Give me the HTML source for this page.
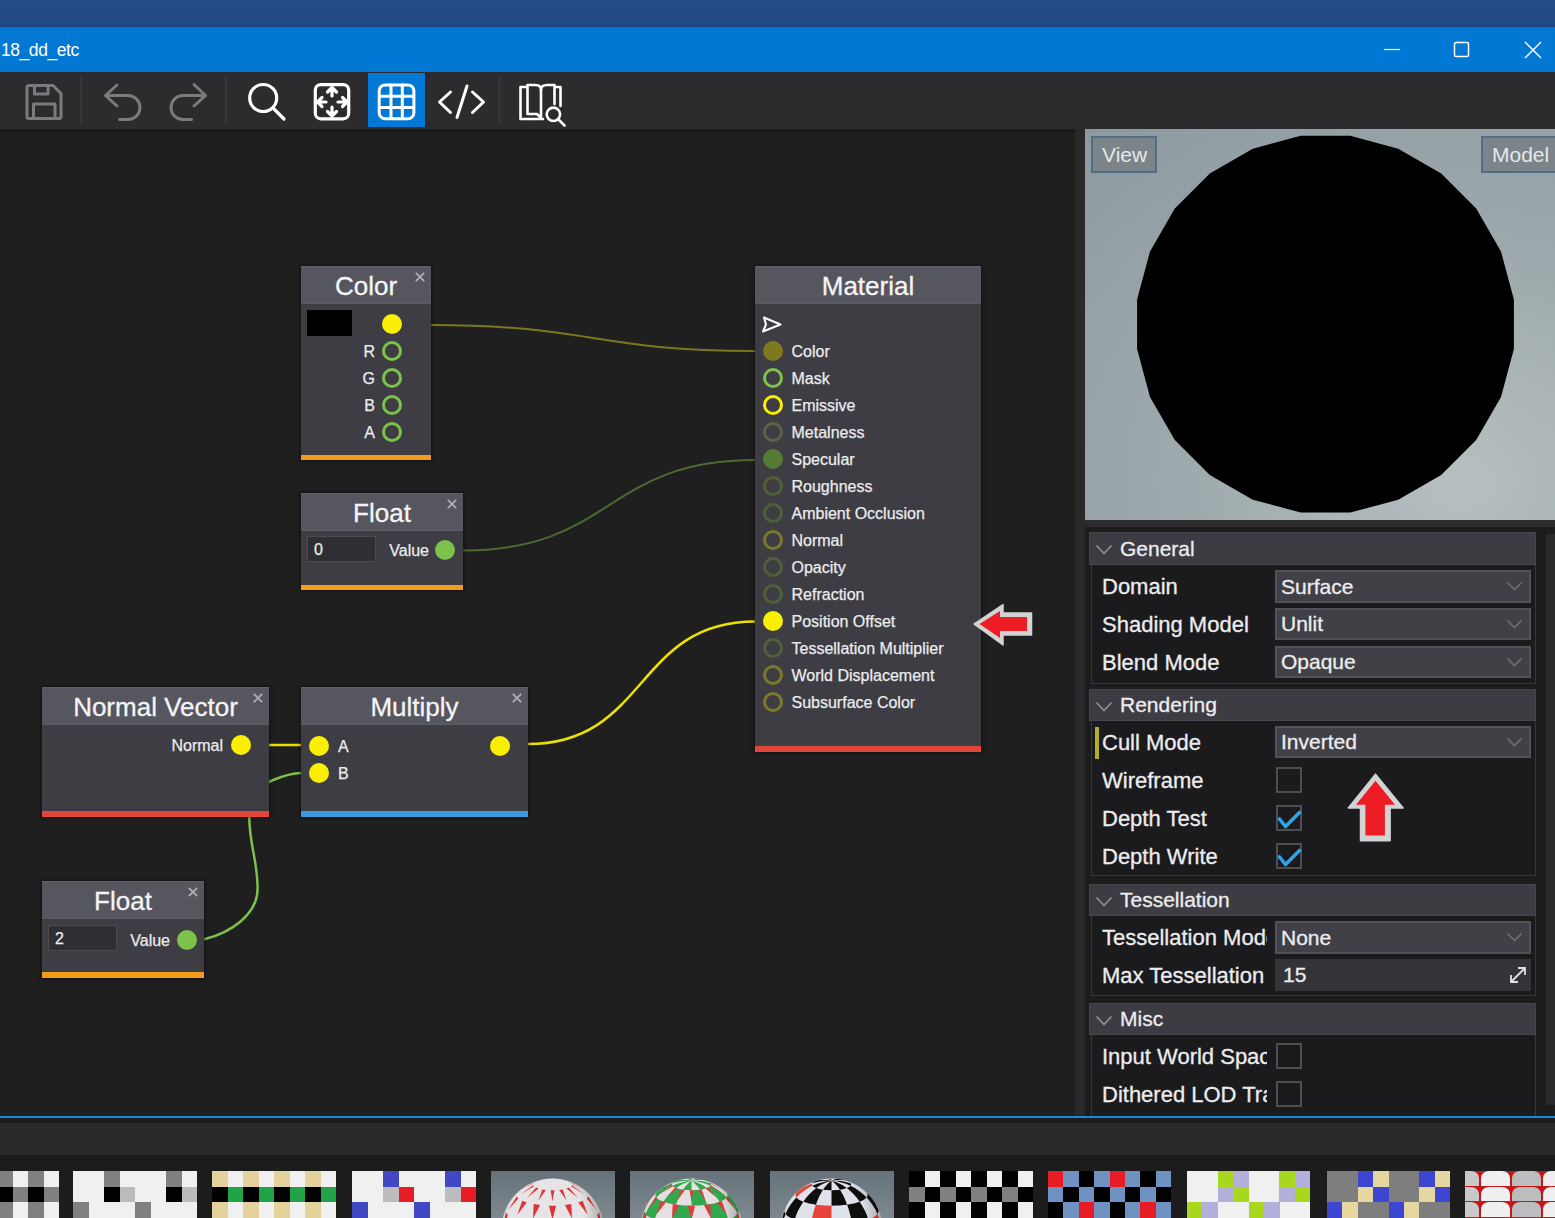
<!DOCTYPE html>
<html><head><meta charset="utf-8">
<style>
*{box-sizing:border-box;margin:0;padding:0}
html,body{width:1555px;height:1218px;overflow:hidden;background:#1f1f1f;font-family:"Liberation Sans",sans-serif;color:#e8e8ea}
.a{position:absolute}
#top{left:0;top:0;width:1555px;height:27px;background:linear-gradient(#254c89,#21487f)}
#title{left:0;top:27px;width:1555px;height:45px;background:#0078d4}
#title .t{left:1px;top:13px;font-size:17.5px;letter-spacing:-0.45px;color:#fff;line-height:20px}
#tb{left:0;top:72px;width:1555px;height:57px;background:#2c2c2f}
#canvas{left:0;top:129px;width:1075px;height:987px;background:#1f1f1f;overflow:hidden}
.node{position:absolute;background:#3d3d43;box-shadow:0 0 3px 1px rgba(0,0,0,.45)}
.node .hd{position:absolute;left:0;top:0;width:100%;height:38px;background:#56565e;border-top:1px solid #616168;border-bottom:1px solid #5d5d63;text-align:center;font-size:26px;line-height:39px;color:#f4f4f6;-webkit-text-stroke:0.3px #f4f4f6}
.node .x{position:absolute;top:6px;right:6px;width:10px;height:10px}
.node .st{position:absolute;left:0;bottom:0;width:100%;height:6px}
.lbl{position:absolute;font-size:16px;line-height:20px;color:#ececee;-webkit-text-stroke:0.25px #ececee;white-space:nowrap}
.ptxt{color:#ececee;white-space:nowrap;-webkit-text-stroke:0.3px #ececee}
.sock{position:absolute;width:20px;height:20px;border-radius:50%}
</style></head><body>
<div id="top" class="a"></div>
<div id="title" class="a"><div class="t a">18_dd_etc</div>
<svg class="a" style="left:0;top:0" width="1555" height="45">
<line x1="1384" y1="22.5" x2="1400" y2="22.5" stroke="#fff" stroke-width="1.2"/>
<rect x="1454.5" y="15.5" width="14" height="14" rx="1.5" fill="none" stroke="#fff" stroke-width="1.5"/>
<path d="M1525 15 L1541 31 M1541 15 L1525 31" stroke="#fff" stroke-width="1.5"/>
</svg>
</div>
<div id="tb" class="a"><svg class="a" style="left:0;top:-72px" width="600" height="130" fill="none" stroke-linecap="round" stroke-linejoin="round">
<g stroke="#7b7b7f" stroke-width="3">
<path d="M28.5 85.5 H53 L61 93.5 V116.5 Q61 118.5 59 118.5 H29 Q27 118.5 27 116.5 V87.5 Q27 85.5 29 85.5 Z"/>
<path d="M34.5 86 V94 H48 V86"/>
<path d="M33.5 118 V104 H55 V118"/>
<path d="M117 85 L105.5 95.5 L117 106 M105.5 95.5 H128 A12 12 0 0 1 128 119.5 H119.5"/>
<path d="M194 84.5 L205.5 95.5 L194 106 M205.5 95.5 H183 A12 12 0 0 0 183 119.5 H191.5"/>
</g>
<g stroke="#3a3a3d" stroke-width="1.5"><line x1="81" y1="77" x2="81" y2="124"/><line x1="226" y1="77" x2="226" y2="124"/><line x1="499.5" y1="77" x2="499.5" y2="124"/></g>
<g stroke="#ffffff" stroke-width="3.2">
<circle cx="263.2" cy="98" r="13.5"/>
<path d="M273.5 108.5 L284 119"/>
<rect x="315.3" y="84.6" width="33.4" height="34.2" rx="5.5"/>
<path d="M332 88 V96 M327.5 92 L332 87.5 L336.5 92 M332 107 V115.5 M327.5 111.5 L332 116 L336.5 111.5 M318 102 H326 M322 97.5 L317.5 102 L322 106.5 M338 102 H346.5 M342.5 97.5 L347 102 L342.5 106.5"/>
</g>
<rect x="368" y="73" width="57" height="54" fill="#0078d4" stroke="none"/>
<g stroke="#ffffff" stroke-width="3">
<rect x="379.2" y="84.9" width="34.7" height="33.8" rx="6"/>
<path d="M391 85 V118.5 M402.3 85 V118.5 M379.5 96.2 H413.5 M379.5 107.5 H413.5"/>
<path d="M450.5 92 L439.5 102 L450.5 112.5 M467 86 L457 117.5 M472.5 92 L483.5 102 L472.5 112.5"/>
</g>
<g stroke="#ffffff" stroke-width="2.6">
<path d="M525.5 87 H520.5 V119 H543"/>
<path d="M541 118 L537 114 H527.5 V85 H535.5 Q541 85 541 90 V118"/>
<path d="M541 90 Q541 85 547 85 H554.5 V104"/>
<path d="M555.5 87 H560.5 V106"/>
<circle cx="553.4" cy="114.3" r="6.7"/>
<path d="M558.5 119.5 L564.5 125.5"/>
</g>
</svg></div>
<div id="canvas" class="a"><div class="a" style="left:0;top:0;width:1075px;height:7px;background:linear-gradient(#18181a,#1f1f1f)"></div><svg class="a" style="left:0;top:0" width="1075" height="987"><path d="M431 196 C591 196 595 222 755 222" stroke="#7a781f" stroke-width="2" fill="none"/><path d="M463 421.5 C613 421.5 605 331 755 331" stroke="#4d6a32" stroke-width="2" fill="none"/><path d="M528 615 C648 615 635 492.5 755 492.5" stroke="#ece000" stroke-width="2.5" fill="none"/><path d="M269 616 C279 616 291 616 301 616" stroke="#ece000" stroke-width="2.5" fill="none"/><path d="M204.3 810.2 C230 804 257.6 786 257.6 759.7 C257.6 731 249.3 716 249.3 688 C249.3 671 258 657 272 651.5 C285 646 295 644 301 644" stroke="#7dc24b" stroke-width="2.5" fill="none"/></svg><div class="node" style="left:301px;top:137px;width:130px;height:194px">
<div class="hd">Color</div>
<svg class="x" viewBox="0 0 10 10"><path d="M0.8 0.8 L9.2 9.2 M9.2 0.8 L0.8 9.2" stroke="#aeaeb4" stroke-width="1.8"/></svg>
<div class="a" style="left:6px;top:44px;width:45px;height:26px;background:#000"></div><div class="sock" style="left:81px;top:48px;background:#fbef00"></div><div class="sock" style="left:81px;top:75px;border:3px solid #7dc24b"></div><div class="lbl" style="right:56px;top:76px">R</div><div class="sock" style="left:81px;top:102px;border:3px solid #7dc24b"></div><div class="lbl" style="right:56px;top:103px">G</div><div class="sock" style="left:81px;top:129px;border:3px solid #7dc24b"></div><div class="lbl" style="right:56px;top:130px">B</div><div class="sock" style="left:81px;top:156px;border:3px solid #7dc24b"></div><div class="lbl" style="right:56px;top:157px">A</div><div class="st" style="background:#f39c1a;height:5px"></div></div><div class="node" style="left:301px;top:364px;width:162px;height:97px">
<div class="hd">Float</div>
<svg class="x" viewBox="0 0 10 10"><path d="M0.8 0.8 L9.2 9.2 M9.2 0.8 L0.8 9.2" stroke="#aeaeb4" stroke-width="1.8"/></svg>
<div class="a" style="left:6px;top:43px;width:69px;height:26px;background:#2e2e33;border:1px solid #4c4c52"></div><div class="lbl" style="left:13px;top:47px">0</div><div class="sock" style="left:134px;top:47px;background:#7dc24b"></div><div class="lbl" style="right:34px;top:48px">Value</div><div class="st" style="background:#f39c1a;height:5px"></div></div><div class="node" style="left:755px;top:137px;width:226px;height:486px">
<div class="hd">Material</div>

<svg class="a" style="left:6px;top:50px" width="22" height="18"><path d="M3 1.5 L19.5 8.5 L2 15.5 L5 8.5 Z" fill="none" stroke="#fff" stroke-width="2" stroke-linejoin="round"/></svg><div class="sock" style="left:7.5px;top:75px;background:#7d7a1e"></div><div class="lbl" style="left:36.5px;top:76px">Color</div><div class="sock" style="left:7.5px;top:102px;border:3px solid #7dc24b"></div><div class="lbl" style="left:36.5px;top:103px">Mask</div><div class="sock" style="left:7.5px;top:129px;border:3px solid #fbef00"></div><div class="lbl" style="left:36.5px;top:130px">Emissive</div><div class="sock" style="left:7.5px;top:156px;border:3px solid #58634a"></div><div class="lbl" style="left:36.5px;top:157px">Metalness</div><div class="sock" style="left:7.5px;top:183px;background:#557a35"></div><div class="lbl" style="left:36.5px;top:184px">Specular</div><div class="sock" style="left:7.5px;top:210px;border:3px solid #4f6139"></div><div class="lbl" style="left:36.5px;top:211px">Roughness</div><div class="sock" style="left:7.5px;top:237px;border:3px solid #4f6139"></div><div class="lbl" style="left:36.5px;top:238px">Ambient Occlusion</div><div class="sock" style="left:7.5px;top:264px;border:3px solid #7c7a2a"></div><div class="lbl" style="left:36.5px;top:265px">Normal</div><div class="sock" style="left:7.5px;top:291px;border:3px solid #4f6139"></div><div class="lbl" style="left:36.5px;top:292px">Opacity</div><div class="sock" style="left:7.5px;top:318px;border:3px solid #4f6139"></div><div class="lbl" style="left:36.5px;top:319px">Refraction</div><div class="sock" style="left:7.5px;top:345px;background:#fbef00"></div><div class="lbl" style="left:36.5px;top:346px">Position Offset</div><div class="sock" style="left:7.5px;top:372px;border:3px solid #4f6139"></div><div class="lbl" style="left:36.5px;top:373px">Tessellation Multiplier</div><div class="sock" style="left:7.5px;top:399px;border:3px solid #7c7a2a"></div><div class="lbl" style="left:36.5px;top:400px">World Displacement</div><div class="sock" style="left:7.5px;top:426px;border:3px solid #7c7a2a"></div><div class="lbl" style="left:36.5px;top:427px">Subsurface Color</div><div class="st" style="background:#e2463a;height:6px"></div></div><div class="node" style="left:42px;top:558px;width:227px;height:130px">
<div class="hd">Normal Vector</div>
<svg class="x" viewBox="0 0 10 10"><path d="M0.8 0.8 L9.2 9.2 M9.2 0.8 L0.8 9.2" stroke="#aeaeb4" stroke-width="1.8"/></svg>
<div class="sock" style="left:188.5px;top:48px;background:#fbef00"></div><div class="lbl" style="right:46px;top:49px">Normal</div><div class="st" style="background:#e2463a;height:6px"></div></div><div class="node" style="left:301px;top:558px;width:227px;height:130px">
<div class="hd">Multiply</div>
<svg class="x" viewBox="0 0 10 10"><path d="M0.8 0.8 L9.2 9.2 M9.2 0.8 L0.8 9.2" stroke="#aeaeb4" stroke-width="1.8"/></svg>
<div class="sock" style="left:7.5px;top:48.5px;background:#fbef00"></div><div class="sock" style="left:7.5px;top:76px;background:#fbef00"></div><div class="sock" style="left:188.5px;top:48.5px;background:#fbef00"></div><div class="lbl" style="left:37px;top:49.5px">A</div><div class="lbl" style="left:37px;top:77px">B</div><div class="st" style="background:#3a98dc;height:6px"></div></div><div class="node" style="left:42px;top:752px;width:162px;height:97px">
<div class="hd">Float</div>
<svg class="x" viewBox="0 0 10 10"><path d="M0.8 0.8 L9.2 9.2 M9.2 0.8 L0.8 9.2" stroke="#aeaeb4" stroke-width="1.8"/></svg>
<div class="a" style="left:6px;top:44px;width:69px;height:26px;background:#2e2e33;border:1px solid #4c4c52"></div><div class="lbl" style="left:13px;top:48px">2</div><div class="sock" style="left:134.5px;top:48.5px;background:#7dc24b"></div><div class="lbl" style="right:34px;top:49.5px">Value</div><div class="st" style="background:#f39c1a;height:6px"></div></div><svg class="a" style="left:0;top:0" width="1075" height="987">
<polygon points="974,495 1003,475.5 1003,484 1031.5,484 1031.5,506 1003,506 1003,516" fill="#d2d4d4" stroke="#d2d4d4" stroke-width="1.5" stroke-linejoin="round"/>
<polygon points="979.5,495 1000,482 1000,488 1027,488 1027,502 1000,502 1000,509" fill="#ee1c24"/>
</svg></div>
<div class="a" style="left:1075px;top:129px;width:10px;height:987px;background:#29292c"></div>
<div class="a" style="left:1085px;top:129px;width:470px;height:391px;overflow:hidden;background:radial-gradient(ellipse 640px 520px at 80% 90%, #b6c0c3 0%, #a0abae 40%, #88959b 100%)">
<svg class="a" style="left:0;top:0" width="470" height="391"><polygon points="265.3,6.8 313.2,19.7 356.2,44.5 391.2,79.5 416.0,122.5 428.9,170.4 428.9,220.0 416.0,267.9 391.2,310.9 356.2,345.9 313.2,370.7 265.3,383.6 215.7,383.6 167.8,370.7 124.8,345.9 89.8,310.9 65.0,267.9 52.1,220.0 52.1,170.4 65.0,122.5 89.8,79.5 124.8,44.5 167.8,19.7 215.7,6.8" fill="#000"/></svg>
<div class="a" style="left:6px;top:7px;width:66px;height:37px;border:2px solid #4e6d87;background:#7b8489;font-size:21px;line-height:33px;color:#e4e8ea;padding-left:9px">View</div>
<div class="a" style="left:396px;top:7px;width:90px;height:37px;border:2px solid #4e6d87;background:#7b8489;font-size:21px;line-height:33px;color:#e4e8ea;padding-left:9px">Model</div>
</div>
<div class="a" style="left:1085px;top:520px;width:470px;height:7px;background:#2c2c2f"></div>
<div class="a" style="left:1085px;top:527px;width:470px;height:589px;background:#1c1c1c"></div>
<div class="a" style="left:1546px;top:534px;width:9px;height:571px;background:#2a2a2c"></div>
<div class="a" style="left:1089px;top:532px;width:447px;height:33px;background:#3c3c42;border:1px solid #46464c"></div>
<svg class="a" style="left:1095px;top:544px" width="20" height="12"><path d="M1.5 1.5 L9 9.5 L16.5 1.5" fill="none" stroke="#8c8c92" stroke-width="1.8"/></svg>
<div class="a ptxt" style="left:1120px;top:532px;line-height:33px;font-size:21px">General</div>
<div class="a" style="left:1091px;top:565px;width:445px;height:119px;border:1px solid #38383c;border-top:none;background:#1b1b1d"></div>
<div class="a ptxt" style="left:1102px;top:573px;width:165px;height:28px;line-height:28px;font-size:22px;overflow:hidden;white-space:nowrap">Domain</div>
<div class="a ptxt" style="left:1102px;top:611px;width:165px;height:28px;line-height:28px;font-size:22px;overflow:hidden;white-space:nowrap">Shading Model</div>
<div class="a ptxt" style="left:1102px;top:649px;width:165px;height:28px;line-height:28px;font-size:22px;overflow:hidden;white-space:nowrap">Blend Mode</div>
<div class="a" style="left:1275px;top:570px;width:256px;height:33px;background:#404046;border:2px solid #525258"></div>
<div class="a ptxt" style="left:1281px;top:570px;line-height:33px;font-size:21px">Surface</div>
<svg class="a" style="left:1506px;top:581px" width="18" height="11"><path d="M1.5 1.5 L8.5 8.5 L15.5 1.5" fill="none" stroke="#6e6e74" stroke-width="1.6"/></svg>
<div class="a" style="left:1275px;top:608px;width:256px;height:32px;background:#404046;border:2px solid #525258"></div>
<div class="a ptxt" style="left:1281px;top:608px;line-height:32px;font-size:21px">Unlit</div>
<svg class="a" style="left:1506px;top:619px" width="18" height="11"><path d="M1.5 1.5 L8.5 8.5 L15.5 1.5" fill="none" stroke="#6e6e74" stroke-width="1.6"/></svg>
<div class="a" style="left:1275px;top:646px;width:256px;height:32px;background:#404046;border:2px solid #525258"></div>
<div class="a ptxt" style="left:1281px;top:646px;line-height:32px;font-size:21px">Opaque</div>
<svg class="a" style="left:1506px;top:657px" width="18" height="11"><path d="M1.5 1.5 L8.5 8.5 L15.5 1.5" fill="none" stroke="#6e6e74" stroke-width="1.6"/></svg>
<div class="a" style="left:1089px;top:689px;width:447px;height:32px;background:#3c3c42;border:1px solid #46464c"></div>
<svg class="a" style="left:1095px;top:701px" width="20" height="12"><path d="M1.5 1.5 L9 9.5 L16.5 1.5" fill="none" stroke="#8c8c92" stroke-width="1.8"/></svg>
<div class="a ptxt" style="left:1120px;top:689px;line-height:32px;font-size:21px">Rendering</div>
<div class="a" style="left:1091px;top:721px;width:445px;height:155px;border:1px solid #38383c;border-top:none;background:#1b1b1d"></div>
<div class="a" style="left:1095px;top:727px;width:4px;height:32px;background:#b2b020"></div>
<div class="a ptxt" style="left:1102px;top:729px;width:165px;height:28px;line-height:28px;font-size:22px;overflow:hidden;white-space:nowrap">Cull Mode</div>
<div class="a ptxt" style="left:1102px;top:767px;width:165px;height:28px;line-height:28px;font-size:22px;overflow:hidden;white-space:nowrap">Wireframe</div>
<div class="a ptxt" style="left:1102px;top:805px;width:165px;height:28px;line-height:28px;font-size:22px;overflow:hidden;white-space:nowrap">Depth Test</div>
<div class="a ptxt" style="left:1102px;top:843px;width:165px;height:28px;line-height:28px;font-size:22px;overflow:hidden;white-space:nowrap">Depth Write</div>
<div class="a" style="left:1275px;top:726px;width:256px;height:32px;background:#404046;border:2px solid #525258"></div>
<div class="a ptxt" style="left:1281px;top:726px;line-height:32px;font-size:21px">Inverted</div>
<svg class="a" style="left:1506px;top:737px" width="18" height="11"><path d="M1.5 1.5 L8.5 8.5 L15.5 1.5" fill="none" stroke="#6e6e74" stroke-width="1.6"/></svg>
<div class="a" style="left:1276px;top:767px;width:26px;height:26px;border:2px solid #4e4e52"></div>
<div class="a" style="left:1276px;top:805px;width:26px;height:26px;border:2px solid #4e4e52"></div><svg class="a" style="left:1276px;top:805px" width="26" height="26"><path d="M3.5 14 L9.5 21.5 L23.5 7.5" fill="none" stroke="#2ba4ea" stroke-width="3.6" stroke-linecap="round" stroke-linejoin="round"/></svg>
<div class="a" style="left:1276px;top:843px;width:26px;height:26px;border:2px solid #4e4e52"></div><svg class="a" style="left:1276px;top:843px" width="26" height="26"><path d="M3.5 14 L9.5 21.5 L23.5 7.5" fill="none" stroke="#2ba4ea" stroke-width="3.6" stroke-linecap="round" stroke-linejoin="round"/></svg>
<svg class="a" style="left:1340px;top:770px" width="70" height="75">
<polygon points="35.5,4.1 63.1,37.9 50.1,37.9 50.1,70.7 20.5,70.7 20.5,37.9 8.3,37.9" fill="#d2d4d4" stroke="#d2d4d4" stroke-width="1.5" stroke-linejoin="round"/>
<polygon points="35.5,10.7 55,34.8 44.9,34.8 44.9,65.5 25.4,65.5 25.4,34.8 16,34.8" fill="#ec1c24"/>
</svg>
<div class="a" style="left:1089px;top:884px;width:447px;height:32px;background:#3c3c42;border:1px solid #46464c"></div>
<svg class="a" style="left:1095px;top:896px" width="20" height="12"><path d="M1.5 1.5 L9 9.5 L16.5 1.5" fill="none" stroke="#8c8c92" stroke-width="1.8"/></svg>
<div class="a ptxt" style="left:1120px;top:884px;line-height:32px;font-size:21px">Tessellation</div>
<div class="a" style="left:1091px;top:916px;width:445px;height:80px;border:1px solid #38383c;border-top:none;background:#1b1b1d"></div>
<div class="a ptxt" style="left:1102px;top:924px;width:165px;height:28px;line-height:28px;font-size:22px;overflow:hidden;white-space:nowrap">Tessellation Mode</div>
<div class="a ptxt" style="left:1102px;top:962px;width:165px;height:28px;line-height:28px;font-size:22px;overflow:hidden;white-space:nowrap">Max Tessellation</div>
<div class="a" style="left:1275px;top:921px;width:256px;height:33px;background:#404046;border:2px solid #525258"></div>
<div class="a ptxt" style="left:1281px;top:921px;line-height:33px;font-size:21px">None</div>
<svg class="a" style="left:1506px;top:932px" width="18" height="11"><path d="M1.5 1.5 L8.5 8.5 L15.5 1.5" fill="none" stroke="#6e6e74" stroke-width="1.6"/></svg>
<div class="a" style="left:1275px;top:959px;width:256px;height:32px;background:#333338"></div>
<div class="a ptxt" style="left:1283px;top:959px;line-height:32px;font-size:21px">15</div>
<svg class="a" style="left:1508px;top:965px" width="20" height="20"><path d="M3 17 L17 3 M10 3 H17 V10 M3 10 V17 H10" fill="none" stroke="#e0e0e2" stroke-width="1.8"/></svg>
<div class="a" style="left:1089px;top:1003px;width:447px;height:32px;background:#3c3c42;border:1px solid #46464c"></div>
<svg class="a" style="left:1095px;top:1015px" width="20" height="12"><path d="M1.5 1.5 L9 9.5 L16.5 1.5" fill="none" stroke="#8c8c92" stroke-width="1.8"/></svg>
<div class="a ptxt" style="left:1120px;top:1003px;line-height:32px;font-size:21px">Misc</div>
<div class="a" style="left:1091px;top:1035px;width:445px;height:95px;border:1px solid #38383c;border-top:none;background:#1b1b1d"></div>
<div class="a ptxt" style="left:1102px;top:1043px;width:165px;height:28px;line-height:28px;font-size:22px;overflow:hidden;white-space:nowrap">Input World Space</div>
<div class="a ptxt" style="left:1102px;top:1081px;width:165px;height:28px;line-height:28px;font-size:22px;overflow:hidden;white-space:nowrap">Dithered LOD Transition</div>
<div class="a" style="left:1276px;top:1043px;width:26px;height:26px;border:2px solid #4e4e52"></div>
<div class="a" style="left:1276px;top:1081px;width:26px;height:26px;border:2px solid #4e4e52"></div>
<div class="a" style="left:0;top:1116px;width:1555px;height:2px;background:#1e88d8"></div>
<div class="a" style="left:0;top:1118px;width:1555px;height:5px;background:#1c1c1e"></div>
<div class="a" style="left:0;top:1123px;width:1555px;height:32px;background:#29292c"></div>
<div class="a" style="left:0;top:1155px;width:1555px;height:63px;background:#1c1c1c"></div>
<div class="a" style="left:-65px;top:1171px;width:124px;height:47px;overflow:hidden;background:#f0f0f0"><div class="a" style="left:62.0px;top:0.0px;width:15.8px;height:15.8px;background:#808080"></div><div class="a" style="left:93.0px;top:0.0px;width:15.8px;height:15.8px;background:#808080"></div><div class="a" style="left:62.0px;top:15.5px;width:15.8px;height:15.8px;background:#000"></div><div class="a" style="left:77.5px;top:15.5px;width:15.8px;height:15.8px;background:#808080"></div><div class="a" style="left:93.0px;top:15.5px;width:15.8px;height:15.8px;background:#000"></div><div class="a" style="left:108.5px;top:15.5px;width:15.8px;height:15.8px;background:#808080"></div><div class="a" style="left:62.0px;top:31.0px;width:15.8px;height:15.8px;background:#808080"></div><div class="a" style="left:93.0px;top:31.0px;width:15.8px;height:15.8px;background:#808080"></div></div>
<div class="a" style="left:73px;top:1171px;width:124px;height:47px;overflow:hidden;background:#f0f0f0"><div class="a" style="left:31.0px;top:0.0px;width:15.8px;height:15.8px;background:#808080"></div><div class="a" style="left:93.0px;top:0.0px;width:15.8px;height:15.8px;background:#808080"></div><div class="a" style="left:31.0px;top:15.5px;width:15.8px;height:15.8px;background:#000"></div><div class="a" style="left:46.5px;top:15.5px;width:15.8px;height:15.8px;background:#bcbcbc"></div><div class="a" style="left:93.0px;top:15.5px;width:15.8px;height:15.8px;background:#000"></div><div class="a" style="left:108.5px;top:15.5px;width:15.8px;height:15.8px;background:#bcbcbc"></div><div class="a" style="left:0.0px;top:31.0px;width:15.8px;height:15.8px;background:#808080"></div><div class="a" style="left:62.0px;top:31.0px;width:15.8px;height:15.8px;background:#808080"></div></div>
<div class="a" style="left:212px;top:1171px;width:124px;height:47px;overflow:hidden;background:#f0f0f0"><div class="a" style="left:0.0px;top:0.0px;width:15.8px;height:15.8px;background:#e3d29c"></div><div class="a" style="left:31.0px;top:0.0px;width:15.8px;height:15.8px;background:#e3d29c"></div><div class="a" style="left:62.0px;top:0.0px;width:15.8px;height:15.8px;background:#e3d29c"></div><div class="a" style="left:93.0px;top:0.0px;width:15.8px;height:15.8px;background:#e3d29c"></div><div class="a" style="left:0.0px;top:15.5px;width:15.8px;height:15.8px;background:#000"></div><div class="a" style="left:15.5px;top:15.5px;width:15.8px;height:15.8px;background:#22a446"></div><div class="a" style="left:31.0px;top:15.5px;width:15.8px;height:15.8px;background:#000"></div><div class="a" style="left:46.5px;top:15.5px;width:15.8px;height:15.8px;background:#22a446"></div><div class="a" style="left:62.0px;top:15.5px;width:15.8px;height:15.8px;background:#000"></div><div class="a" style="left:77.5px;top:15.5px;width:15.8px;height:15.8px;background:#22a446"></div><div class="a" style="left:93.0px;top:15.5px;width:15.8px;height:15.8px;background:#000"></div><div class="a" style="left:108.5px;top:15.5px;width:15.8px;height:15.8px;background:#22a446"></div><div class="a" style="left:0.0px;top:31.0px;width:15.8px;height:15.8px;background:#e3d29c"></div><div class="a" style="left:31.0px;top:31.0px;width:15.8px;height:15.8px;background:#e3d29c"></div><div class="a" style="left:62.0px;top:31.0px;width:15.8px;height:15.8px;background:#e3d29c"></div><div class="a" style="left:93.0px;top:31.0px;width:15.8px;height:15.8px;background:#e3d29c"></div></div>
<div class="a" style="left:352px;top:1171px;width:124px;height:47px;overflow:hidden;background:#f0f0f0"><div class="a" style="left:31.0px;top:0.0px;width:15.8px;height:15.8px;background:#4048c4"></div><div class="a" style="left:93.0px;top:0.0px;width:15.8px;height:15.8px;background:#4048c4"></div><div class="a" style="left:31.0px;top:15.5px;width:15.8px;height:15.8px;background:#bcbcbc"></div><div class="a" style="left:46.5px;top:15.5px;width:15.8px;height:15.8px;background:#e81c24"></div><div class="a" style="left:93.0px;top:15.5px;width:15.8px;height:15.8px;background:#bcbcbc"></div><div class="a" style="left:108.5px;top:15.5px;width:15.8px;height:15.8px;background:#e81c24"></div><div class="a" style="left:0.0px;top:31.0px;width:15.8px;height:15.8px;background:#4048c4"></div><div class="a" style="left:62.0px;top:31.0px;width:15.8px;height:15.8px;background:#4048c4"></div><div class="a" style="left:15.5px;top:46.5px;width:15.8px;height:15.8px;background:#e81c24"></div><div class="a" style="left:77.5px;top:46.5px;width:15.8px;height:15.8px;background:#e81c24"></div></div>
<div class="a" style="left:491px;top:1171px;width:124px;height:47px;overflow:hidden"><svg width="124" height="47" style="position:absolute;left:0;top:0"><defs><linearGradient id="g140605294762784" x1="0" y1="0" x2="0" y2="1"><stop offset="0" stop-color="#65727a"/><stop offset="1" stop-color="#7d898e"/></linearGradient><radialGradient id="s140605294762784" cx="0.45" cy="0.35" r="0.6"><stop offset="0.6" stop-color="#000" stop-opacity="0"/><stop offset="1" stop-color="#000" stop-opacity="0.35"/></radialGradient></defs><rect width="124" height="47" fill="url(#g140605294762784)"/><circle cx="61.5" cy="58.5" r="51" fill="#e6e4e6"/><polygon points="57.9,103.6 65.1,103.6 61.5,108.6" fill="#e03434"/><polygon points="73.9,103.0 80.3,102.1 71.9,107.9" fill="#e03434"/><polygon points="87.3,100.4 91.8,98.7 80.3,105.9" fill="#e03434"/><polygon points="31.2,98.7 35.7,100.4 42.7,105.9" fill="#e03434"/><polygon points="42.7,102.1 49.1,103.0 51.1,107.9" fill="#e03434"/><polygon points="56.9,91.0 66.1,91.0 61.5,101.1" fill="#e03434"/><polygon points="77.7,90.2 86.0,89.0 78.6,99.9" fill="#e03434"/><polygon points="95.3,86.9 101.1,84.7 92.3,96.7" fill="#e03434"/><polygon points="21.9,84.7 27.7,86.9 30.7,96.7" fill="#e03434"/><polygon points="37.0,89.0 45.3,90.2 44.4,99.9" fill="#e03434"/><polygon points="56.5,73.5 66.5,73.5 61.5,87.1" fill="#e03434"/><polygon points="79.0,72.7 88.0,71.4 82.7,85.6" fill="#e03434"/><polygon points="98.0,69.0 104.3,66.7 99.7,81.6" fill="#e03434"/><polygon points="109.9,63.3 112.1,60.4 109.1,75.9" fill="#e03434"/><polygon points="10.9,60.4 13.1,63.3 13.9,75.9" fill="#e03434"/><polygon points="18.7,66.7 25.0,69.0 23.3,81.6" fill="#e03434"/><polygon points="35.0,71.4 44.0,72.7 40.3,85.6" fill="#e03434"/><polygon points="56.9,53.7 66.1,53.7 61.5,68.7" fill="#e03434"/><polygon points="77.7,52.9 86.0,51.7 83.5,67.2" fill="#e03434"/><polygon points="95.3,49.6 101.1,47.4 101.2,63.1" fill="#e03434"/><polygon points="106.2,44.3 108.2,41.6 111.0,57.1" fill="#e03434"/><polygon points="14.8,41.6 16.8,44.3 12.0,57.1" fill="#e03434"/><polygon points="21.9,47.4 27.7,49.6 21.8,63.1" fill="#e03434"/><polygon points="37.0,51.7 45.3,52.9 39.5,67.2" fill="#e03434"/><polygon points="57.9,34.7 65.1,34.7 61.5,48.8" fill="#e03434"/><polygon points="73.9,34.1 80.3,33.1 81.0,47.5" fill="#e03434"/><polygon points="87.3,31.5 91.8,29.8 96.7,43.8" fill="#e03434"/><polygon points="95.7,27.4 97.3,25.4 105.4,38.5" fill="#e03434"/><polygon points="25.7,25.4 27.3,27.4 17.6,38.5" fill="#e03434"/><polygon points="31.2,29.8 35.7,31.5 26.3,43.8" fill="#e03434"/><polygon points="42.7,33.1 49.1,34.1 42.0,47.5" fill="#e03434"/><polygon points="59.6,19.2 63.4,19.2 61.5,30.4" fill="#e03434"/><polygon points="68.2,18.9 71.7,18.4 75.5,29.5" fill="#e03434"/><polygon points="75.5,17.5 77.9,16.6 86.8,26.8" fill="#e03434"/><polygon points="80.0,15.3 80.9,14.2 93.0,23.0" fill="#e03434"/><polygon points="80.9,12.8 80.0,11.7 93.0,18.7" fill="#e03434"/><polygon points="43.0,11.7 42.1,12.8 30.0,18.7" fill="#e03434"/><polygon points="42.1,14.2 43.0,15.3 30.0,23.0" fill="#e03434"/><polygon points="45.1,16.6 47.5,17.5 36.2,26.8" fill="#e03434"/><polygon points="51.3,18.4 54.8,18.9 47.5,29.5" fill="#e03434"/><polygon points="61.5,9.8 61.5,9.8 61.5,16.3" fill="#e03434"/><polygon points="61.5,9.8 61.5,9.8 67.9,15.8" fill="#e03434"/><polygon points="61.5,9.8 61.5,9.8 73.1,14.6" fill="#e03434"/><polygon points="61.5,9.8 61.5,9.8 75.9,12.8" fill="#e03434"/><polygon points="61.5,9.8 61.5,9.8 75.9,10.9" fill="#e03434"/><polygon points="61.5,9.8 61.5,9.8 73.1,9.1" fill="#e03434"/><polygon points="61.5,9.8 61.5,9.8 67.9,7.9" fill="#e03434"/><polygon points="61.5,9.8 61.5,9.8 61.5,7.5" fill="#e03434"/><polygon points="61.5,9.8 61.5,9.8 55.1,7.9" fill="#e03434"/><polygon points="61.5,9.8 61.5,9.8 49.9,9.1" fill="#e03434"/><polygon points="61.5,9.8 61.5,9.8 47.1,10.9" fill="#e03434"/><polygon points="61.5,9.8 61.5,9.8 47.1,12.8" fill="#e03434"/><polygon points="61.5,9.8 61.5,9.8 49.9,14.6" fill="#e03434"/><polygon points="61.5,9.8 61.5,9.8 55.1,15.8" fill="#e03434"/><circle cx="61.5" cy="58.5" r="51" fill="url(#s140605294762784)"/></svg></div>
<div class="a" style="left:630px;top:1171px;width:124px;height:47px;overflow:hidden"><svg width="124" height="47" style="position:absolute;left:0;top:0"><defs><linearGradient id="g140605294763424" x1="0" y1="0" x2="0" y2="1"><stop offset="0" stop-color="#65727a"/><stop offset="1" stop-color="#7d898e"/></linearGradient><radialGradient id="s140605294763424" cx="0.45" cy="0.35" r="0.6"><stop offset="0.6" stop-color="#000" stop-opacity="0"/><stop offset="1" stop-color="#000" stop-opacity="0.35"/></radialGradient></defs><rect width="124" height="47" fill="url(#g140605294763424)"/><circle cx="61.5" cy="58.5" r="51" fill="#e4e0e2"/><polygon points="101.4,67.9 104.7,66.5 107.4,65.0 109.6,63.5 111.2,61.9 111.2,61.9 111.0,57.1 110.3,52.3 109.1,47.6 107.4,43.0 107.4,43.0 106.0,44.5 104.0,45.9 101.4,47.3 98.3,48.5 98.3,48.5 99.7,53.3 100.6,58.2 101.2,63.1 101.4,67.9" fill="#2fa84e"/><polygon points="11.8,55.1 10.8,56.8 10.5,58.5 10.8,60.2 11.8,61.9 11.8,61.9 12.0,57.1 12.7,52.3 13.9,47.6 15.6,43.0 15.6,43.0 14.7,41.4 14.4,39.9 14.7,38.3 15.6,36.8 15.6,36.8 13.9,41.1 12.7,45.7 12.0,50.4 11.8,55.1" fill="#2fa84e"/><polygon points="21.6,67.9 25.4,69.2 29.7,70.3 34.4,71.3 39.4,72.1 39.4,72.1 39.5,67.2 39.8,62.3 40.3,57.4 41.1,52.4 41.1,52.4 36.4,51.6 32.1,50.7 28.2,49.7 24.7,48.5 24.7,48.5 23.3,53.3 22.4,58.2 21.8,63.1 21.6,67.9" fill="#2fa84e"/><polygon points="81.9,52.4 86.6,51.6 90.9,50.7 94.8,49.7 98.3,48.5 98.3,48.5 96.7,43.8 94.7,39.2 92.3,34.9 89.7,30.7 89.7,30.7 87.0,31.6 84.0,32.4 80.7,33.1 77.1,33.7 77.1,33.7 78.6,38.1 79.9,42.7 81.0,47.5 81.9,52.4" fill="#2fa84e"/><polygon points="107.4,43.0 108.3,41.4 108.6,39.9 108.3,38.3 107.4,36.8 107.4,36.8 105.4,32.6 102.8,28.6 99.9,25.0 96.7,21.7 96.7,21.7 97.3,22.9 97.6,24.0 97.3,25.2 96.7,26.4 96.7,26.4 99.9,30.2 102.8,34.2 105.4,38.5 107.4,43.0" fill="#2fa84e"/><polygon points="15.6,43.0 17.0,44.5 19.0,45.9 21.6,47.3 24.7,48.5 24.7,48.5 26.3,43.8 28.3,39.2 30.7,34.9 33.3,30.7 33.3,30.7 31.0,29.7 29.0,28.7 27.5,27.6 26.3,26.4 26.3,26.4 23.1,30.2 20.2,34.2 17.6,38.5 15.6,43.0" fill="#2fa84e"/><polygon points="41.1,52.4 45.9,53.0 51.0,53.4 56.2,53.7 61.5,53.8 61.5,53.8 61.5,48.8 61.5,44.0 61.5,39.2 61.5,34.7 61.5,34.7 57.5,34.6 53.5,34.4 49.6,34.1 45.9,33.7 45.9,33.7 44.4,38.1 43.1,42.7 42.0,47.5 41.1,52.4" fill="#2fa84e"/><polygon points="61.5,34.7 65.5,34.6 69.5,34.4 73.4,34.1 77.1,33.7 77.1,33.7 75.5,29.5 73.8,25.5 71.9,21.9 70.0,18.7 70.0,18.7 67.9,18.9 65.8,19.1 63.7,19.2 61.5,19.3 61.5,19.3 61.5,22.6 61.5,26.4 61.5,30.4 61.5,34.7" fill="#2fa84e"/><polygon points="89.7,30.7 92.0,29.7 94.0,28.7 95.5,27.6 96.7,26.4 96.7,26.4 93.0,23.0 89.1,19.9 84.9,17.1 80.5,14.8 80.5,14.8 79.9,15.4 79.1,16.0 78.0,16.6 76.8,17.1 76.8,17.1 80.3,20.0 83.7,23.2 86.8,26.8 89.7,30.7" fill="#2fa84e"/><polygon points="26.3,21.7 25.7,22.9 25.4,24.0 25.7,25.2 26.3,26.4 26.3,26.4 30.0,23.0 33.9,19.9 38.1,17.1 42.5,14.8 42.5,14.8 42.1,14.1 42.0,13.5 42.1,12.8 42.5,12.2 42.5,12.2 38.1,13.9 33.9,16.1 30.0,18.7 26.3,21.7" fill="#2fa84e"/><polygon points="33.3,30.7 36.0,31.6 39.0,32.4 42.3,33.1 45.9,33.7 45.9,33.7 47.5,29.5 49.2,25.5 51.1,21.9 53.0,18.7 53.0,18.7 51.1,18.4 49.3,18.0 47.7,17.6 46.2,17.1 46.2,17.1 42.7,20.0 39.3,23.2 36.2,26.8 33.3,30.7" fill="#2fa84e"/><polygon points="70.0,18.7 71.9,18.4 73.7,18.0 75.3,17.6 76.8,17.1 76.8,17.1 73.1,14.6 69.3,12.5 65.4,10.9 61.5,9.8 61.5,9.8 61.5,9.8 61.5,9.8 61.5,9.8 61.5,9.8 61.5,9.8 63.7,11.3 65.8,13.4 67.9,15.8 70.0,18.7" fill="#2fa84e"/><polygon points="80.5,14.8 80.9,14.1 81.0,13.5 80.9,12.8 80.5,12.2 80.5,12.2 75.9,10.9 71.2,10.1 66.4,9.7 61.5,9.8 61.5,9.8 61.5,9.8 61.5,9.8 61.5,9.8 61.5,9.8 61.5,9.8 66.4,10.3 71.2,11.4 75.9,12.8 80.5,14.8" fill="#2fa84e"/><polygon points="76.8,9.9 75.3,9.4 73.7,9.0 71.9,8.6 70.0,8.3 70.0,8.3 67.9,7.9 65.8,8.1 63.7,8.7 61.5,9.8 61.5,9.8 61.5,9.8 61.5,9.8 61.5,9.8 61.5,9.8 61.5,9.8 65.4,9.1 69.3,8.9 73.1,9.1 76.8,9.9" fill="#2fa84e"/><polygon points="61.5,7.7 59.3,7.8 57.2,7.9 55.1,8.0 53.0,8.3 53.0,8.3 55.1,7.9 57.2,8.1 59.3,8.7 61.5,9.8 61.5,9.8 61.5,9.8 61.5,9.8 61.5,9.8 61.5,9.8 61.5,9.8 61.5,8.5 61.5,7.8 61.5,7.5 61.5,7.7" fill="#2fa84e"/><polygon points="46.2,9.9 45.0,10.4 43.9,11.0 43.1,11.6 42.5,12.2 42.5,12.2 47.1,10.9 51.8,10.1 56.6,9.7 61.5,9.8 61.5,9.8 61.5,9.8 61.5,9.8 61.5,9.8 61.5,9.8 61.5,9.8 57.6,9.1 53.7,8.9 49.9,9.1 46.2,9.9" fill="#2fa84e"/><polygon points="42.5,14.8 43.1,15.4 43.9,16.0 45.0,16.6 46.2,17.1 46.2,17.1 49.9,14.6 53.7,12.5 57.6,10.9 61.5,9.8 61.5,9.8 61.5,9.8 61.5,9.8 61.5,9.8 61.5,9.8 61.5,9.8 56.6,10.3 51.8,11.4 47.1,12.8 42.5,14.8" fill="#2fa84e"/><polygon points="53.0,18.7 55.1,18.9 57.2,19.1 59.3,19.2 61.5,19.3 61.5,19.3 61.5,16.3 61.5,13.7 61.5,11.5 61.5,9.8 61.5,9.8 61.5,9.8 61.5,9.8 61.5,9.8 61.5,9.8 61.5,9.8 59.3,11.3 57.2,13.4 55.1,15.8 53.0,18.7" fill="#2fa84e"/><polygon points="57.9,103.6 65.1,103.6 61.5,108.6" fill="#e23a3a"/><polygon points="73.9,103.0 80.3,102.1 71.9,107.9" fill="#e23a3a"/><polygon points="87.3,100.4 91.8,98.7 80.3,105.9" fill="#e23a3a"/><polygon points="31.2,98.7 35.7,100.4 42.7,105.9" fill="#e23a3a"/><polygon points="42.7,102.1 49.1,103.0 51.1,107.9" fill="#e23a3a"/><polygon points="56.9,91.0 66.1,91.0 61.5,101.1" fill="#e23a3a"/><polygon points="77.7,90.2 86.0,89.0 78.6,99.9" fill="#e23a3a"/><polygon points="95.3,86.9 101.1,84.7 92.3,96.7" fill="#e23a3a"/><polygon points="21.9,84.7 27.7,86.9 30.7,96.7" fill="#e23a3a"/><polygon points="37.0,89.0 45.3,90.2 44.4,99.9" fill="#e23a3a"/><polygon points="56.5,73.5 66.5,73.5 61.5,87.1" fill="#e23a3a"/><polygon points="79.0,72.7 88.0,71.4 82.7,85.6" fill="#e23a3a"/><polygon points="98.0,69.0 104.3,66.7 99.7,81.6" fill="#e23a3a"/><polygon points="109.9,63.3 112.1,60.4 109.1,75.9" fill="#e23a3a"/><polygon points="10.9,60.4 13.1,63.3 13.9,75.9" fill="#e23a3a"/><polygon points="18.7,66.7 25.0,69.0 23.3,81.6" fill="#e23a3a"/><polygon points="35.0,71.4 44.0,72.7 40.3,85.6" fill="#e23a3a"/><polygon points="56.9,53.7 66.1,53.7 61.5,68.7" fill="#e23a3a"/><polygon points="77.7,52.9 86.0,51.7 83.5,67.2" fill="#e23a3a"/><polygon points="95.3,49.6 101.1,47.4 101.2,63.1" fill="#e23a3a"/><polygon points="106.2,44.3 108.2,41.6 111.0,57.1" fill="#e23a3a"/><polygon points="14.8,41.6 16.8,44.3 12.0,57.1" fill="#e23a3a"/><polygon points="21.9,47.4 27.7,49.6 21.8,63.1" fill="#e23a3a"/><polygon points="37.0,51.7 45.3,52.9 39.5,67.2" fill="#e23a3a"/><polygon points="57.9,34.7 65.1,34.7 61.5,48.8" fill="#e23a3a"/><polygon points="73.9,34.1 80.3,33.1 81.0,47.5" fill="#e23a3a"/><polygon points="87.3,31.5 91.8,29.8 96.7,43.8" fill="#e23a3a"/><polygon points="95.7,27.4 97.3,25.4 105.4,38.5" fill="#e23a3a"/><polygon points="25.7,25.4 27.3,27.4 17.6,38.5" fill="#e23a3a"/><polygon points="31.2,29.8 35.7,31.5 26.3,43.8" fill="#e23a3a"/><polygon points="42.7,33.1 49.1,34.1 42.0,47.5" fill="#e23a3a"/><polygon points="59.6,19.2 63.4,19.2 61.5,30.4" fill="#e23a3a"/><polygon points="68.2,18.9 71.7,18.4 75.5,29.5" fill="#e23a3a"/><polygon points="75.5,17.5 77.9,16.6 86.8,26.8" fill="#e23a3a"/><polygon points="80.0,15.3 80.9,14.2 93.0,23.0" fill="#e23a3a"/><polygon points="80.9,12.8 80.0,11.7 93.0,18.7" fill="#e23a3a"/><polygon points="43.0,11.7 42.1,12.8 30.0,18.7" fill="#e23a3a"/><polygon points="42.1,14.2 43.0,15.3 30.0,23.0" fill="#e23a3a"/><polygon points="45.1,16.6 47.5,17.5 36.2,26.8" fill="#e23a3a"/><polygon points="51.3,18.4 54.8,18.9 47.5,29.5" fill="#e23a3a"/><polygon points="61.5,9.8 61.5,9.8 61.5,16.3" fill="#e23a3a"/><polygon points="61.5,9.8 61.5,9.8 67.9,15.8" fill="#e23a3a"/><polygon points="61.5,9.8 61.5,9.8 73.1,14.6" fill="#e23a3a"/><polygon points="61.5,9.8 61.5,9.8 75.9,12.8" fill="#e23a3a"/><polygon points="61.5,9.8 61.5,9.8 75.9,10.9" fill="#e23a3a"/><polygon points="61.5,9.8 61.5,9.8 73.1,9.1" fill="#e23a3a"/><polygon points="61.5,9.8 61.5,9.8 67.9,7.9" fill="#e23a3a"/><polygon points="61.5,9.8 61.5,9.8 61.5,7.5" fill="#e23a3a"/><polygon points="61.5,9.8 61.5,9.8 55.1,7.9" fill="#e23a3a"/><polygon points="61.5,9.8 61.5,9.8 49.9,9.1" fill="#e23a3a"/><polygon points="61.5,9.8 61.5,9.8 47.1,10.9" fill="#e23a3a"/><polygon points="61.5,9.8 61.5,9.8 47.1,12.8" fill="#e23a3a"/><polygon points="61.5,9.8 61.5,9.8 49.9,14.6" fill="#e23a3a"/><polygon points="61.5,9.8 61.5,9.8 55.1,15.8" fill="#e23a3a"/><circle cx="61.5" cy="58.5" r="51" fill="url(#s140605294763424)"/></svg></div>
<div class="a" style="left:770px;top:1171px;width:124px;height:47px;overflow:hidden"><svg width="124" height="47" style="position:absolute;left:0;top:0"><defs><linearGradient id="g140605294762784" x1="0" y1="0" x2="0" y2="1"><stop offset="0" stop-color="#65727a"/><stop offset="1" stop-color="#7d898e"/></linearGradient><radialGradient id="s140605294762784" cx="0.45" cy="0.35" r="0.6"><stop offset="0.6" stop-color="#000" stop-opacity="0"/><stop offset="1" stop-color="#000" stop-opacity="0.35"/></radialGradient></defs><rect width="124" height="47" fill="url(#g140605294762784)"/><circle cx="61.5" cy="58.5" r="51" fill="#dfe2ea"/><polygon points="101.4,67.9 104.7,66.5 107.4,65.0 109.6,63.5 111.2,61.9 111.2,61.9 111.0,57.1 110.3,52.3 109.1,47.6 107.4,43.0 107.4,43.0 106.0,44.5 104.0,45.9 101.4,47.3 98.3,48.5 98.3,48.5 99.7,53.3 100.6,58.2 101.2,63.1 101.4,67.9" fill="#e8443a"/><polygon points="11.8,55.1 10.8,56.8 10.5,58.5 10.8,60.2 11.8,61.9 11.8,61.9 12.0,57.1 12.7,52.3 13.9,47.6 15.6,43.0 15.6,43.0 14.7,41.4 14.4,39.9 14.7,38.3 15.6,36.8 15.6,36.8 13.9,41.1 12.7,45.7 12.0,50.4 11.8,55.1" fill="#0e0e0e"/><polygon points="21.6,67.9 25.4,69.2 29.7,70.3 34.4,71.3 39.4,72.1 39.4,72.1 39.5,67.2 39.8,62.3 40.3,57.4 41.1,52.4 41.1,52.4 36.4,51.6 32.1,50.7 28.2,49.7 24.7,48.5 24.7,48.5 23.3,53.3 22.4,58.2 21.8,63.1 21.6,67.9" fill="#0e0e0e"/><polygon points="81.9,52.4 86.6,51.6 90.9,50.7 94.8,49.7 98.3,48.5 98.3,48.5 96.7,43.8 94.7,39.2 92.3,34.9 89.7,30.7 89.7,30.7 87.0,31.6 84.0,32.4 80.7,33.1 77.1,33.7 77.1,33.7 78.6,38.1 79.9,42.7 81.0,47.5 81.9,52.4" fill="#0e0e0e"/><polygon points="107.4,43.0 108.3,41.4 108.6,39.9 108.3,38.3 107.4,36.8 107.4,36.8 105.4,32.6 102.8,28.6 99.9,25.0 96.7,21.7 96.7,21.7 97.3,22.9 97.6,24.0 97.3,25.2 96.7,26.4 96.7,26.4 99.9,30.2 102.8,34.2 105.4,38.5 107.4,43.0" fill="#0e0e0e"/><polygon points="15.6,43.0 17.0,44.5 19.0,45.9 21.6,47.3 24.7,48.5 24.7,48.5 26.3,43.8 28.3,39.2 30.7,34.9 33.3,30.7 33.3,30.7 31.0,29.7 29.0,28.7 27.5,27.6 26.3,26.4 26.3,26.4 23.1,30.2 20.2,34.2 17.6,38.5 15.6,43.0" fill="#0e0e0e"/><polygon points="41.1,52.4 45.9,53.0 51.0,53.4 56.2,53.7 61.5,53.8 61.5,53.8 61.5,48.8 61.5,44.0 61.5,39.2 61.5,34.7 61.5,34.7 57.5,34.6 53.5,34.4 49.6,34.1 45.9,33.7 45.9,33.7 44.4,38.1 43.1,42.7 42.0,47.5 41.1,52.4" fill="#e8443a"/><polygon points="61.5,34.7 65.5,34.6 69.5,34.4 73.4,34.1 77.1,33.7 77.1,33.7 75.5,29.5 73.8,25.5 71.9,21.9 70.0,18.7 70.0,18.7 67.9,18.9 65.8,19.1 63.7,19.2 61.5,19.3 61.5,19.3 61.5,22.6 61.5,26.4 61.5,30.4 61.5,34.7" fill="#0e0e0e"/><polygon points="89.7,30.7 92.0,29.7 94.0,28.7 95.5,27.6 96.7,26.4 96.7,26.4 93.0,23.0 89.1,19.9 84.9,17.1 80.5,14.8 80.5,14.8 79.9,15.4 79.1,16.0 78.0,16.6 76.8,17.1 76.8,17.1 80.3,20.0 83.7,23.2 86.8,26.8 89.7,30.7" fill="#0e0e0e"/><polygon points="26.3,21.7 25.7,22.9 25.4,24.0 25.7,25.2 26.3,26.4 26.3,26.4 30.0,23.0 33.9,19.9 38.1,17.1 42.5,14.8 42.5,14.8 42.1,14.1 42.0,13.5 42.1,12.8 42.5,12.2 42.5,12.2 38.1,13.9 33.9,16.1 30.0,18.7 26.3,21.7" fill="#e8443a"/><polygon points="33.3,30.7 36.0,31.6 39.0,32.4 42.3,33.1 45.9,33.7 45.9,33.7 47.5,29.5 49.2,25.5 51.1,21.9 53.0,18.7 53.0,18.7 51.1,18.4 49.3,18.0 47.7,17.6 46.2,17.1 46.2,17.1 42.7,20.0 39.3,23.2 36.2,26.8 33.3,30.7" fill="#0e0e0e"/><polygon points="70.0,18.7 71.9,18.4 73.7,18.0 75.3,17.6 76.8,17.1 76.8,17.1 73.1,14.6 69.3,12.5 65.4,10.9 61.5,9.8 61.5,9.8 61.5,9.8 61.5,9.8 61.5,9.8 61.5,9.8 61.5,9.8 63.7,11.3 65.8,13.4 67.9,15.8 70.0,18.7" fill="#0e0e0e"/><polygon points="80.5,14.8 80.9,14.1 81.0,13.5 80.9,12.8 80.5,12.2 80.5,12.2 75.9,10.9 71.2,10.1 66.4,9.7 61.5,9.8 61.5,9.8 61.5,9.8 61.5,9.8 61.5,9.8 61.5,9.8 61.5,9.8 66.4,10.3 71.2,11.4 75.9,12.8 80.5,14.8" fill="#0e0e0e"/><polygon points="76.8,9.9 75.3,9.4 73.7,9.0 71.9,8.6 70.0,8.3 70.0,8.3 67.9,7.9 65.8,8.1 63.7,8.7 61.5,9.8 61.5,9.8 61.5,9.8 61.5,9.8 61.5,9.8 61.5,9.8 61.5,9.8 65.4,9.1 69.3,8.9 73.1,9.1 76.8,9.9" fill="#0e0e0e"/><polygon points="61.5,7.7 59.3,7.8 57.2,7.9 55.1,8.0 53.0,8.3 53.0,8.3 55.1,7.9 57.2,8.1 59.3,8.7 61.5,9.8 61.5,9.8 61.5,9.8 61.5,9.8 61.5,9.8 61.5,9.8 61.5,9.8 61.5,8.5 61.5,7.8 61.5,7.5 61.5,7.7" fill="#e8443a"/><polygon points="46.2,9.9 45.0,10.4 43.9,11.0 43.1,11.6 42.5,12.2 42.5,12.2 47.1,10.9 51.8,10.1 56.6,9.7 61.5,9.8 61.5,9.8 61.5,9.8 61.5,9.8 61.5,9.8 61.5,9.8 61.5,9.8 57.6,9.1 53.7,8.9 49.9,9.1 46.2,9.9" fill="#0e0e0e"/><polygon points="42.5,14.8 43.1,15.4 43.9,16.0 45.0,16.6 46.2,17.1 46.2,17.1 49.9,14.6 53.7,12.5 57.6,10.9 61.5,9.8 61.5,9.8 61.5,9.8 61.5,9.8 61.5,9.8 61.5,9.8 61.5,9.8 56.6,10.3 51.8,11.4 47.1,12.8 42.5,14.8" fill="#0e0e0e"/><polygon points="53.0,18.7 55.1,18.9 57.2,19.1 59.3,19.2 61.5,19.3 61.5,19.3 61.5,16.3 61.5,13.7 61.5,11.5 61.5,9.8 61.5,9.8 61.5,9.8 61.5,9.8 61.5,9.8 61.5,9.8 61.5,9.8 59.3,11.3 57.2,13.4 55.1,15.8 53.0,18.7" fill="#0e0e0e"/><circle cx="61.5" cy="58.5" r="51" fill="url(#s140605294762784)"/></svg></div>
<div class="a" style="left:909px;top:1171px;width:124px;height:47px;overflow:hidden;background:#f0f0f0"><div class="a" style="left:0.0px;top:0.0px;width:15.8px;height:15.8px;background:#000"></div><div class="a" style="left:31.0px;top:0.0px;width:15.8px;height:15.8px;background:#000"></div><div class="a" style="left:62.0px;top:0.0px;width:15.8px;height:15.8px;background:#000"></div><div class="a" style="left:93.0px;top:0.0px;width:15.8px;height:15.8px;background:#000"></div><div class="a" style="left:0.0px;top:15.5px;width:15.8px;height:15.8px;background:#808080"></div><div class="a" style="left:15.5px;top:15.5px;width:15.8px;height:15.8px;background:#000"></div><div class="a" style="left:31.0px;top:15.5px;width:15.8px;height:15.8px;background:#808080"></div><div class="a" style="left:46.5px;top:15.5px;width:15.8px;height:15.8px;background:#000"></div><div class="a" style="left:62.0px;top:15.5px;width:15.8px;height:15.8px;background:#808080"></div><div class="a" style="left:77.5px;top:15.5px;width:15.8px;height:15.8px;background:#000"></div><div class="a" style="left:93.0px;top:15.5px;width:15.8px;height:15.8px;background:#808080"></div><div class="a" style="left:108.5px;top:15.5px;width:15.8px;height:15.8px;background:#000"></div><div class="a" style="left:0.0px;top:31.0px;width:15.8px;height:15.8px;background:#000"></div><div class="a" style="left:31.0px;top:31.0px;width:15.8px;height:15.8px;background:#000"></div><div class="a" style="left:62.0px;top:31.0px;width:15.8px;height:15.8px;background:#000"></div><div class="a" style="left:93.0px;top:31.0px;width:15.8px;height:15.8px;background:#000"></div></div>
<div class="a" style="left:1048px;top:1171px;width:123px;height:47px;overflow:hidden;background:#f0f0f0"><div class="a" style="left:0.0px;top:0.0px;width:15.7px;height:15.8px;background:#e81c24"></div><div class="a" style="left:15.4px;top:0.0px;width:15.7px;height:15.8px;background:#7092c2"></div><div class="a" style="left:30.8px;top:0.0px;width:15.7px;height:15.8px;background:#000"></div><div class="a" style="left:46.1px;top:0.0px;width:15.7px;height:15.8px;background:#7092c2"></div><div class="a" style="left:61.5px;top:0.0px;width:15.7px;height:15.8px;background:#e81c24"></div><div class="a" style="left:76.9px;top:0.0px;width:15.7px;height:15.8px;background:#7092c2"></div><div class="a" style="left:92.2px;top:0.0px;width:15.7px;height:15.8px;background:#000"></div><div class="a" style="left:107.6px;top:0.0px;width:15.7px;height:15.8px;background:#7092c2"></div><div class="a" style="left:0.0px;top:15.5px;width:15.7px;height:15.8px;background:#7092c2"></div><div class="a" style="left:15.4px;top:15.5px;width:15.7px;height:15.8px;background:#000"></div><div class="a" style="left:30.8px;top:15.5px;width:15.7px;height:15.8px;background:#7092c2"></div><div class="a" style="left:46.1px;top:15.5px;width:15.7px;height:15.8px;background:#000"></div><div class="a" style="left:61.5px;top:15.5px;width:15.7px;height:15.8px;background:#7092c2"></div><div class="a" style="left:76.9px;top:15.5px;width:15.7px;height:15.8px;background:#000"></div><div class="a" style="left:92.2px;top:15.5px;width:15.7px;height:15.8px;background:#7092c2"></div><div class="a" style="left:107.6px;top:15.5px;width:15.7px;height:15.8px;background:#000"></div><div class="a" style="left:0.0px;top:31.0px;width:15.7px;height:15.8px;background:#000"></div><div class="a" style="left:15.4px;top:31.0px;width:15.7px;height:15.8px;background:#7092c2"></div><div class="a" style="left:30.8px;top:31.0px;width:15.7px;height:15.8px;background:#e81c24"></div><div class="a" style="left:46.1px;top:31.0px;width:15.7px;height:15.8px;background:#7092c2"></div><div class="a" style="left:61.5px;top:31.0px;width:15.7px;height:15.8px;background:#000"></div><div class="a" style="left:76.9px;top:31.0px;width:15.7px;height:15.8px;background:#7092c2"></div><div class="a" style="left:92.2px;top:31.0px;width:15.7px;height:15.8px;background:#e81c24"></div><div class="a" style="left:107.6px;top:31.0px;width:15.7px;height:15.8px;background:#7092c2"></div></div>
<div class="a" style="left:1187px;top:1171px;width:123px;height:47px;overflow:hidden;background:#f0f0f0"><div class="a" style="left:30.8px;top:0.0px;width:15.7px;height:15.8px;background:#a8d81e"></div><div class="a" style="left:46.1px;top:0.0px;width:15.7px;height:15.8px;background:#b4b0dc"></div><div class="a" style="left:92.2px;top:0.0px;width:15.7px;height:15.8px;background:#a8d81e"></div><div class="a" style="left:107.6px;top:0.0px;width:15.7px;height:15.8px;background:#b4b0dc"></div><div class="a" style="left:30.8px;top:15.5px;width:15.7px;height:15.8px;background:#b4b0dc"></div><div class="a" style="left:46.1px;top:15.5px;width:15.7px;height:15.8px;background:#a8d81e"></div><div class="a" style="left:92.2px;top:15.5px;width:15.7px;height:15.8px;background:#b4b0dc"></div><div class="a" style="left:107.6px;top:15.5px;width:15.7px;height:15.8px;background:#a8d81e"></div><div class="a" style="left:0.0px;top:31.0px;width:15.7px;height:15.8px;background:#a8d81e"></div><div class="a" style="left:15.4px;top:31.0px;width:15.7px;height:15.8px;background:#b4b0dc"></div><div class="a" style="left:61.5px;top:31.0px;width:15.7px;height:15.8px;background:#a8d81e"></div><div class="a" style="left:76.9px;top:31.0px;width:15.7px;height:15.8px;background:#b4b0dc"></div></div>
<div class="a" style="left:1327px;top:1171px;width:123px;height:47px;overflow:hidden;background:#f0f0f0"><div class="a" style="left:0.0px;top:0.0px;width:15.7px;height:15.8px;background:#7e7e7e"></div><div class="a" style="left:15.4px;top:0.0px;width:15.7px;height:15.8px;background:#7e7e7e"></div><div class="a" style="left:30.8px;top:0.0px;width:15.7px;height:15.8px;background:#3c46d0"></div><div class="a" style="left:46.1px;top:0.0px;width:15.7px;height:15.8px;background:#e6d6a0"></div><div class="a" style="left:61.5px;top:0.0px;width:15.7px;height:15.8px;background:#7e7e7e"></div><div class="a" style="left:76.9px;top:0.0px;width:15.7px;height:15.8px;background:#7e7e7e"></div><div class="a" style="left:92.2px;top:0.0px;width:15.7px;height:15.8px;background:#3c46d0"></div><div class="a" style="left:107.6px;top:0.0px;width:15.7px;height:15.8px;background:#e6d6a0"></div><div class="a" style="left:0.0px;top:15.5px;width:15.7px;height:15.8px;background:#7e7e7e"></div><div class="a" style="left:15.4px;top:15.5px;width:15.7px;height:15.8px;background:#7e7e7e"></div><div class="a" style="left:30.8px;top:15.5px;width:15.7px;height:15.8px;background:#e6d6a0"></div><div class="a" style="left:46.1px;top:15.5px;width:15.7px;height:15.8px;background:#3c46d0"></div><div class="a" style="left:61.5px;top:15.5px;width:15.7px;height:15.8px;background:#7e7e7e"></div><div class="a" style="left:76.9px;top:15.5px;width:15.7px;height:15.8px;background:#7e7e7e"></div><div class="a" style="left:92.2px;top:15.5px;width:15.7px;height:15.8px;background:#e6d6a0"></div><div class="a" style="left:107.6px;top:15.5px;width:15.7px;height:15.8px;background:#3c46d0"></div><div class="a" style="left:0.0px;top:31.0px;width:15.7px;height:15.8px;background:#3c46d0"></div><div class="a" style="left:15.4px;top:31.0px;width:15.7px;height:15.8px;background:#e6d6a0"></div><div class="a" style="left:30.8px;top:31.0px;width:15.7px;height:15.8px;background:#7e7e7e"></div><div class="a" style="left:46.1px;top:31.0px;width:15.7px;height:15.8px;background:#7e7e7e"></div><div class="a" style="left:61.5px;top:31.0px;width:15.7px;height:15.8px;background:#3c46d0"></div><div class="a" style="left:76.9px;top:31.0px;width:15.7px;height:15.8px;background:#e6d6a0"></div><div class="a" style="left:92.2px;top:31.0px;width:15.7px;height:15.8px;background:#7e7e7e"></div><div class="a" style="left:107.6px;top:31.0px;width:15.7px;height:15.8px;background:#7e7e7e"></div></div>
<div class="a" style="left:1465px;top:1171px;width:90px;height:47px;overflow:hidden;background:#c41818"><div class="a" style="left:-15.5px;top:0.0px;width:29.5px;height:14.6px;border-radius:8px 8px 0 0/7px 7px 0 0;background:#c9c9cb"></div><div class="a" style="left:15.6px;top:0.0px;width:29.5px;height:14.6px;border-radius:8px 8px 0 0/7px 7px 0 0;background:#efefef"></div><div class="a" style="left:46.7px;top:0.0px;width:29.5px;height:14.6px;border-radius:8px 8px 0 0/7px 7px 0 0;background:#bdbdbf"></div><div class="a" style="left:77.8px;top:0.0px;width:29.5px;height:14.6px;border-radius:8px 8px 0 0/7px 7px 0 0;background:#efefef"></div><div class="a" style="left:-15.5px;top:15.7px;width:29.5px;height:14.6px;border-radius:8px 8px 0 0/7px 7px 0 0;background:#c9c9cb"></div><div class="a" style="left:15.6px;top:15.7px;width:29.5px;height:14.6px;border-radius:8px 8px 0 0/7px 7px 0 0;background:#efefef"></div><div class="a" style="left:46.7px;top:15.7px;width:29.5px;height:14.6px;border-radius:8px 8px 0 0/7px 7px 0 0;background:#bdbdbf"></div><div class="a" style="left:77.8px;top:15.7px;width:29.5px;height:14.6px;border-radius:8px 8px 0 0/7px 7px 0 0;background:#efefef"></div><div class="a" style="left:-15.5px;top:31.4px;width:29.5px;height:14.6px;border-radius:8px 8px 0 0/7px 7px 0 0;background:#c9c9cb"></div><div class="a" style="left:15.6px;top:31.4px;width:29.5px;height:14.6px;border-radius:8px 8px 0 0/7px 7px 0 0;background:#efefef"></div><div class="a" style="left:46.7px;top:31.4px;width:29.5px;height:14.6px;border-radius:8px 8px 0 0/7px 7px 0 0;background:#bdbdbf"></div><div class="a" style="left:77.8px;top:31.4px;width:29.5px;height:14.6px;border-radius:8px 8px 0 0/7px 7px 0 0;background:#efefef"></div><div class="a" style="left:-15.5px;top:47.1px;width:29.5px;height:14.6px;border-radius:8px 8px 0 0/7px 7px 0 0;background:#c9c9cb"></div><div class="a" style="left:15.6px;top:47.1px;width:29.5px;height:14.6px;border-radius:8px 8px 0 0/7px 7px 0 0;background:#efefef"></div><div class="a" style="left:46.7px;top:47.1px;width:29.5px;height:14.6px;border-radius:8px 8px 0 0/7px 7px 0 0;background:#bdbdbf"></div><div class="a" style="left:77.8px;top:47.1px;width:29.5px;height:14.6px;border-radius:8px 8px 0 0/7px 7px 0 0;background:#efefef"></div></div>
</body></html>
